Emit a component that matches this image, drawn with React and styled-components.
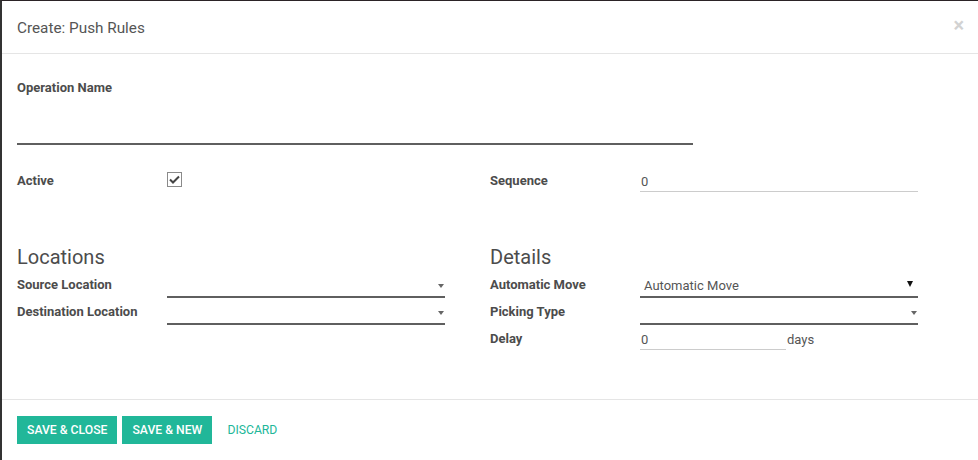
import React from 'react';
import styled, { createGlobalStyle } from 'styled-components';

const GlobalStyle = createGlobalStyle`
    html, body {
        margin: 0;
        padding: 0;
        background: #fff;
    }
    body {
        font-family: Roboto, "Noto Sans", sans-serif;
        font-size: 13px;
        color: #4c4c4c;
    }
`;

const Modal = styled.div`
    box-sizing: border-box;
    height: 460px;
    display: flex;
    flex-direction: column;
    border-top: 1px solid #2b2326;
    border-left: 2px solid #333;
    background: #fff;
`;

const Header = styled.div`
    box-sizing: border-box;
    height: 53px;
    display: flex;
    align-items: center;
    justify-content: space-between;
    padding: 2px 14px 0 15px;
    border-bottom: 1px solid #e5e5e5;
`;

const Title = styled.h4`
    margin: 0;
    font-size: 15.3px;
    font-weight: 400;
    color: #555;
`;

const Close = styled.span`
    font-size: 20px;
    font-weight: 700;
    color: #d2d2d2;
    line-height: 1;
    margin-top: -6px;
`;

const Body = styled.div`
    flex: 1;
    padding: 25px 60px 0 15px;
`;

const Label = styled.label`
    display: block;
    font-weight: 700;
    font-size: 13px;
    line-height: 18px;
    color: #4c4c4c;
`;

const NameInput = styled.div`
    width: 75%;
    height: 46px;
    border-bottom: 2px solid #5f5f5f;
`;

const Columns = styled.div`
    display: grid;
    grid-template-columns: 1fr 1fr;
    column-gap: 45px;
    margin-top: ${p => p.$top || 0}px;
`;

const Group = styled.div`
    display: flex;
    flex-direction: column;
`;

const Row = styled.div`
    display: grid;
    grid-template-columns: 150px 1fr;
    align-items: start;
    margin-bottom: ${p => p.$gap ?? 2}px;
`;

const RowLabel = styled(Label)`
    line-height: 23px;
`;

const Heading = styled.h2`
    margin: 0 0 4px;
    font-size: 20px;
    font-weight: 400;
    line-height: 24px;
    color: #4c4c4c;
`;

const Checkbox = styled.span`
    box-sizing: border-box;
    width: 15px;
    height: 15px;
    margin-top: 3px;
    border: 1px solid #8a8a8a;
    display: flex;
    align-items: center;
    justify-content: center;
`;

const TextInput = styled.div`
    box-sizing: border-box;
    height: 23px;
    width: ${p => p.$width || '100%'};
    border-bottom: 1px solid #ccc;
    padding: 3px 1px 0;
    line-height: 19px;
    color: #555;
`;

const Select = styled.div`
    position: relative;
    box-sizing: border-box;
    height: 25px;
    border-bottom: 2px solid #5f5f5f;
    padding: 3px 4px 0;
    line-height: 19px;
    color: #555;
`;

const Caret = styled.span`
    position: absolute;
    right: ${p => p.$dark ? 5 : 1}px;
    top: ${p => p.$dark ? 8 : 11}px;
    width: 0;
    height: 0;
    border-left: ${p => p.$dark ? 3 : 3.5}px solid transparent;
    border-right: ${p => p.$dark ? 3 : 3.5}px solid transparent;
    border-top: ${p => p.$dark ? 6 : 4}px solid ${p => p.$dark ? '#111' : '#666'};
`;

const Inline = styled.div`
    display: flex;
    align-items: flex-start;
`;

const Unit = styled.span`
    line-height: 23px;
    padding: 1px 0 0 1px;
    color: #555;
`;

const Footer = styled.div`
    box-sizing: border-box;
    height: 61px;
    border-top: 1px solid #e5e5e5;
    padding: 16px 15px 0;
    display: flex;
    align-items: flex-start;
    gap: 5px;
`;

const Button = styled.button`
    height: 28px;
    padding: 0 10px;
    min-width: ${p => p.$min || 0}px;
    border: 0;
    border-radius: 0;
    font-family: Roboto, "Noto Sans", sans-serif;
    font-size: 12.2px;
    text-transform: uppercase;
    color: ${p => p.$link ? '#21b799' : '#fff'};
    background: ${p => p.$link ? 'transparent' : '#21b799'};
    font-weight: ${p => p.$link ? 400 : 500};
    margin-left: ${p => p.$link ? 0 : 0}px;
    cursor: pointer;
`;

const CheckIcon = () => (
    <svg width="11" height="9" viewBox="0 0 11 9">
        <path d="M1 4.5 L4 7.5 L10 1.5" fill="none" stroke="#444" strokeWidth="2" />
    </svg>
);

const App = () => {
    return (
        <Modal>
            <GlobalStyle />
            <Header>
                <Title>Create: Push Rules</Title>
                <Close>×</Close>
            </Header>
            <Body>
                <Label>Operation Name</Label>
                <NameInput />

                <Columns $top={24}>
                    <Group>
                        <Row>
                            <RowLabel>Active</RowLabel>
                            <Checkbox><CheckIcon /></Checkbox>
                        </Row>
                    </Group>
                    <Group>
                        <Row>
                            <RowLabel>Sequence</RowLabel>
                            <TextInput>0</TextInput>
                        </Row>
                    </Group>
                </Columns>

                <Columns $top={51}>
                    <Group>
                        <Heading>Locations</Heading>
                        <Row>
                            <RowLabel>Source Location</RowLabel>
                            <Select><Caret /></Select>
                        </Row>
                        <Row>
                            <RowLabel>Destination Location</RowLabel>
                            <Select><Caret /></Select>
                        </Row>
                    </Group>
                    <Group>
                        <Heading>Details</Heading>
                        <Row>
                            <RowLabel>Automatic Move</RowLabel>
                            <Select>Automatic Move<Caret $dark /></Select>
                        </Row>
                        <Row>
                            <RowLabel>Picking Type</RowLabel>
                            <Select><Caret /></Select>
                        </Row>
                        <Row>
                            <RowLabel>Delay</RowLabel>
                            <Inline>
                                <TextInput $width="146px">0</TextInput>
                                <Unit>days</Unit>
                            </Inline>
                        </Row>
                    </Group>
                </Columns>
            </Body>
            <Footer>
                <Button $min={100}>Save &amp; Close</Button>
                <Button $min={90}>Save &amp; New</Button>
                <Button $link>Discard</Button>
            </Footer>
        </Modal>
    );
};

export default App;
